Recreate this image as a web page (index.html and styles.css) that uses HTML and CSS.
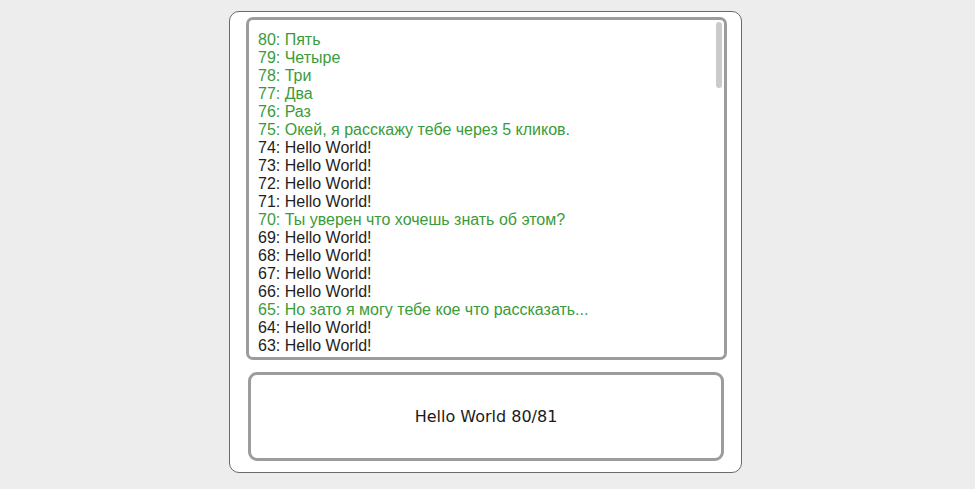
FILE: index.html
```html
<!DOCTYPE html>
<html lang="ru">
<head>
<meta charset="utf-8">
<title>Hello World</title>
<link rel="stylesheet" href="styles.css">
</head>
<body>
<div class="panel">
  <div class="log-frame">
    <div class="log">
      <div class="msg special">80: Пять</div>
      <div class="msg special">79: Четыре</div>
      <div class="msg special">78: Три</div>
      <div class="msg special">77: Два</div>
      <div class="msg special">76: Раз</div>
      <div class="msg special">75: Окей, я расскажу тебе через 5 кликов.</div>
      <div class="msg">74: Hello World!</div>
      <div class="msg">73: Hello World!</div>
      <div class="msg">72: Hello World!</div>
      <div class="msg">71: Hello World!</div>
      <div class="msg special">70: Ты уверен что хочешь знать об этом?</div>
      <div class="msg">69: Hello World!</div>
      <div class="msg">68: Hello World!</div>
      <div class="msg">67: Hello World!</div>
      <div class="msg">66: Hello World!</div>
      <div class="msg special">65: Но зато я могу тебе кое что рассказать...</div>
      <div class="msg">64: Hello World!</div>
      <div class="msg">63: Hello World!</div>
      <div class="msg">62: Hello World!</div>
    </div>
    <div class="scroll-thumb"></div>
  </div>
  <button class="counter" type="button">Hello World 80/81</button>
</div>
</body>
</html>
```

FILE: styles.css
```css
html, body {
  margin: 0;
  padding: 0;
}

body {
  background: #ededed;
  height: 486px;
  overflow: hidden;
}

.panel {
  box-sizing: border-box;
  width: 513px;
  height: 462px;
  margin: 11px 0 0 229px;
  padding: 5px 14px 11px 16px;
  background: #fff;
  border: 1px solid #6a6a6a;
  border-radius: 10px;
  display: flex;
  flex-direction: column;
  gap: 12px;
}

.log-frame {
  position: relative;
  box-sizing: border-box;
  height: 343px;
  flex: none;
  border: 3px solid #9c9c9c;
  border-radius: 7px;
  overflow: hidden;
}

.log {
  height: 100%;
  box-sizing: border-box;
  padding: 11px 9px 0;
  overflow: hidden;
  font-family: "Liberation Sans", Arial, sans-serif;
  font-size: 16px;
  line-height: 18px;
  color: #1e1e1e;
}

.scroll-thumb {
  position: absolute;
  top: 2px;
  right: 2px;
  width: 6px;
  height: 66px;
  background: #cbcbcb;
  border-radius: 3px;
}

.msg {
  white-space: nowrap;
}

.msg.special {
  color: #3a9b3a;
}

.counter {
  flex: 1;
  margin: 0 3px 0 2px;
  background: #fff;
  border: 3px solid #9c9c9c;
  border-radius: 9px;
  font-family: "DejaVu Sans", Verdana, sans-serif;
  font-size: 16px;
  color: #1a1a1a;
  cursor: pointer;
}
```
